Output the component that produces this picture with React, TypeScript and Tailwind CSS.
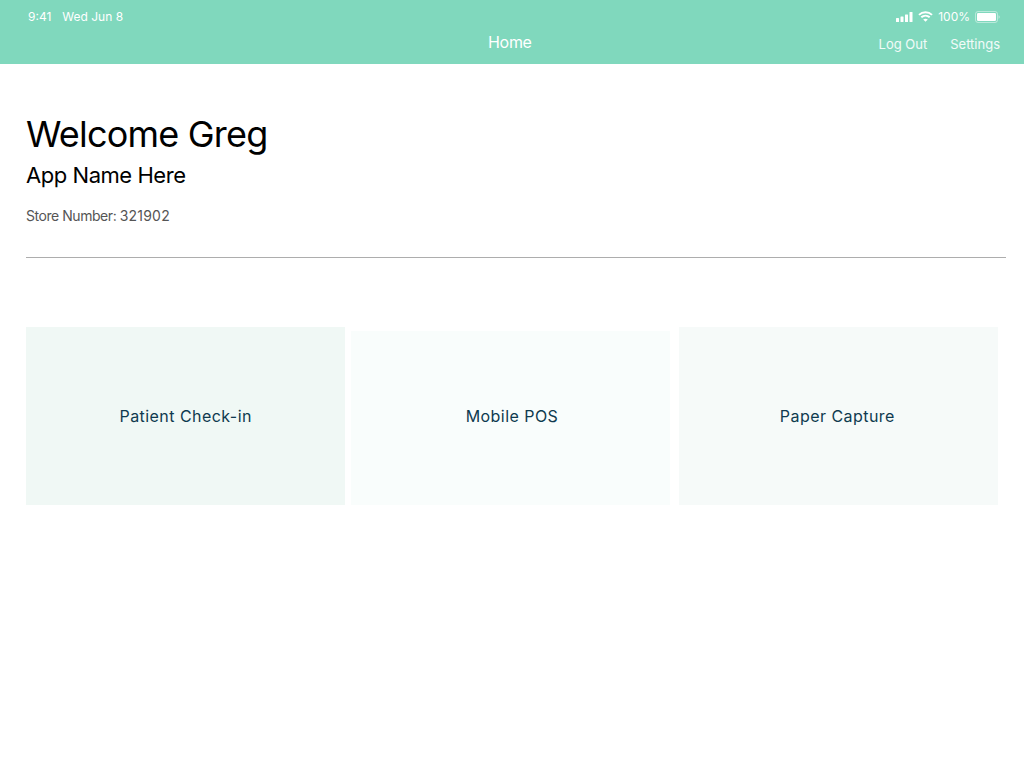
const font = "font-['Inter',sans-serif]";

function SignalIcon() {
  return (
    <svg width="17" height="10" viewBox="0 0 17 10" fill="#ffffff">
      <rect x="0" y="6" width="3" height="4" rx="0.5" />
      <rect x="4.5" y="4.5" width="3" height="5.5" rx="0.5" />
      <rect x="9" y="2.5" width="3" height="7.5" rx="0.5" />
      <rect x="13.5" y="0" width="3" height="10" rx="0.5" />
    </svg>
  );
}

function WifiIcon() {
  return (
    <svg width="15" height="11" viewBox="0 0 15 11" fill="none" stroke="#ffffff" strokeWidth="2">
      <path d="M1 3.9C4.6 0.4 10.4 0.4 14 3.9" />
      <path d="M3.3 6.3C5.7 4.1 9.3 4.1 11.7 6.3" />
      <path d="M7.5 10.8L5.2 8.4C6.5 7.4 8.5 7.4 9.8 8.4Z" fill="#ffffff" stroke="none" />
    </svg>
  );
}

function BatteryIcon() {
  return (
    <svg width="25" height="12" viewBox="0 0 25 12">
      <rect x="0.5" y="0.5" width="22" height="11" rx="2.5" fill="none" stroke="#ffffff" strokeOpacity="0.45" />
      <rect x="2" y="2" width="19" height="8" rx="1.3" fill="#ffffff" />
      <path d="M23.5 4.2C24.3 4.5 24.8 5.2 24.8 6C24.8 6.8 24.3 7.5 23.5 7.8Z" fill="#ffffff" fillOpacity="0.45" />
    </svg>
  );
}

function Tile({ label, className }: { label: string; className: string }) {
  return (
    <button className={`flex items-center justify-center text-[16px] tracking-[0.45px] text-[#0f3a4f] ${className}`}>
      {label}
    </button>
  );
}

export default function App() {
  return (
    <div className={`min-h-[768px] bg-white ${font}`}>
      <header className="h-16 bg-[#80d8bd] text-white">
        <div className="flex h-[33px] items-center justify-between pl-7 pr-6 text-[12px] font-normal">
          <div className="flex gap-[11px]">
            <span>9:41</span>
            <span>Wed Jun 8</span>
          </div>
          <div className="flex items-center gap-[5px]">
            <SignalIcon />
            <WifiIcon />
            <span>100%</span>
            <BatteryIcon />
          </div>
        </div>
        <div className="relative flex h-[22px] items-center justify-end gap-[23px] pt-[2px] pr-6 text-[13px] text-white/90">
          <span className="absolute left-[488px] top-[-3px] text-[16px] tracking-[-0.3px] text-white">Home</span>
          <span>Log Out</span>
          <span>Settings</span>
        </div>
      </header>

      <main className="px-[26px] pt-[45px]">
        <h1 className="text-[36px] leading-[50px] font-normal tracking-[-0.8px] text-black">Welcome Greg</h1>
        <h2 className="mt-[2px] text-[22px] leading-[28px] tracking-[-0.45px] text-black">App Name Here</h2>
        <p className="mt-[17px] text-[14px] leading-[20px] tracking-[-0.45px] text-[#555555]">
          Store Number: <span className="tracking-[0.2px]">321902</span>
        </p>
        <hr className="mt-[31px] mr-[-8px] border-t border-[#adadad]" />

        <div className="mt-[69px] flex items-end">
          <Tile label="Patient Check-in" className="h-[178px] w-[320px] bg-[#f0f8f5]" />
          <Tile label="Mobile POS" className="ml-[6px] h-[174px] w-[319px] bg-[#f9fdfc] pb-[4px] pl-[3px]" />
          <Tile label="Paper Capture" className="ml-[9px] h-[178px] w-[320px] bg-[#f6faf9] pr-[2px]" />
        </div>
      </main>
    </div>
  );
}
